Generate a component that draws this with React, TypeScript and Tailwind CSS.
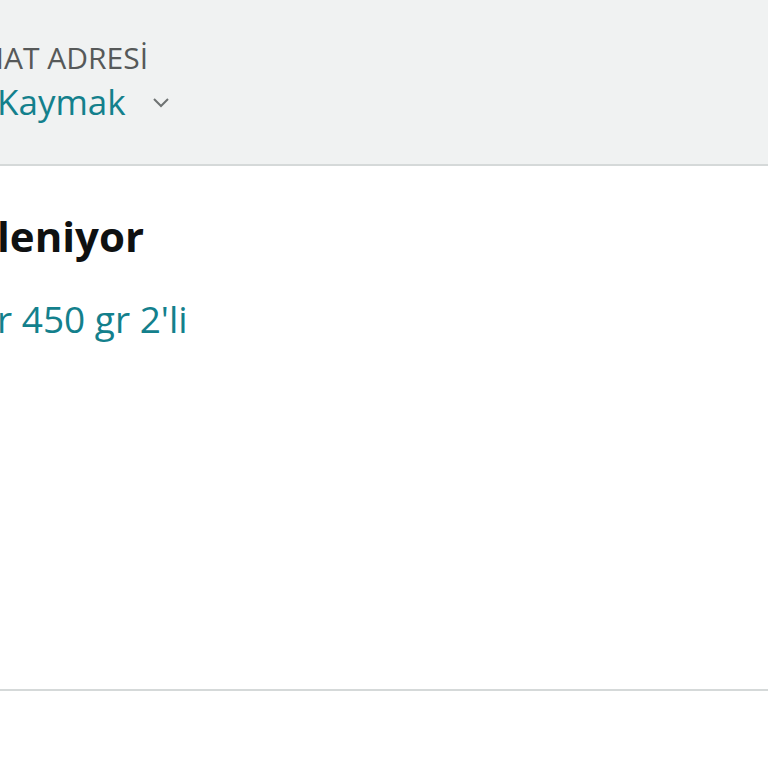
import React from "react";

export default function App() {
  return (
    <div
      className="w-[768px] h-[768px] overflow-hidden bg-white"
      style={{ fontFamily: '"Open Sans", "Noto Sans", sans-serif' }}
    >
      <div className="h-[166px] bg-[#f0f2f2] border-b-2 border-[#d5d9d9] pt-[37px] overflow-hidden">
        <div className="text-[30px] leading-[42px] font-medium text-[#565959] whitespace-nowrap ml-[-23px]">
          MAT ADRESİ
        </div>
        <div className="flex items-center gap-[26px] mt-[0px] whitespace-nowrap">
          <span className="text-[35px] leading-[46px] font-medium text-[#13808c] ml-[-3px]">Kaymak</span>
          <svg width="18" height="12" viewBox="0 0 18 12" className="mt-[2px]">
            <path d="M2 2 L9 9 L16 2" fill="none" stroke="#6f7373" strokeWidth="2" />
          </svg>
        </div>
      </div>
      <div className="h-[525px] border-b-2 border-[#d5d9d9] pt-[39px] overflow-hidden">
        <div className="text-[42px] leading-[62px] font-bold text-[#0f1111] whitespace-nowrap ml-[-3px]">
          leniyor
        </div>
        <div className="mt-[28px] text-[37px] leading-[48px] font-medium text-[#13808c] whitespace-nowrap ml-[-3px]">
          r 450 gr 2'li
        </div>
      </div>
    </div>
  );
}
